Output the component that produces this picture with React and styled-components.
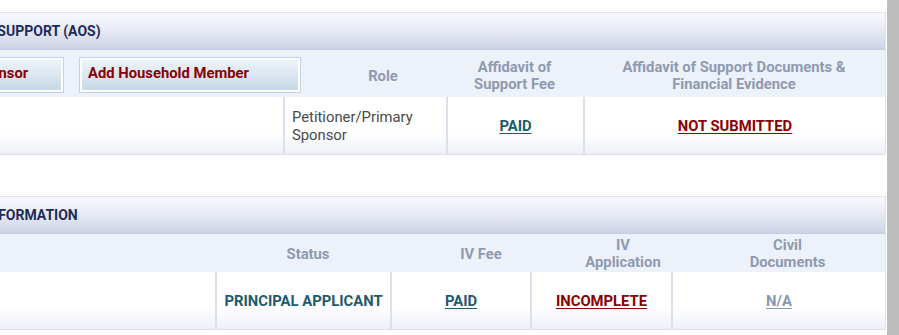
import React from 'react';
import styled, { createGlobalStyle } from 'styled-components';

const GlobalStyle = createGlobalStyle`
  html, body {
    margin: 0;
    padding: 0;
    background: #ffffff;
    overflow: hidden;
  }
  body {
    font-family: Roboto, 'Liberation Sans', Arial, sans-serif;
  }
`;

const Screen = styled.div`
  display: flex;
  width: 899px;
  height: 335px;
`;

const Viewport = styled.div`
  flex: 1;
  overflow: hidden;
  padding-top: 12px;
`;

const ScrollTrack = styled.div`
  width: 12px;
  background: #bebebe;
`;

const Content = styled.div`
  width: 1006px;
  margin-left: -120px;
  display: flex;
  flex-direction: column;
  gap: 41px;
`;

const Panel = styled.section`
  border: 1px solid #dfe4ef;
  border-bottom: none;
  background: #ffffff;
`;

const PanelTitle = styled.h2`
  margin: 0;
  height: 36px;
  display: flex;
  align-items: center;
  padding-left: 24px;
  font-size: 14px;
  font-weight: 700;
  color: #1f2a5c;
  background: linear-gradient(to bottom, #f8f9fc 0%, #e6e9f3 50%, #cdd3e6 100%);
  border-bottom: 1px solid #c6cde0;
`;

const HeadRow = styled.div`
  display: grid;
  grid-template-columns: ${(p) => p.$cols};
  height: ${(p) => p.$h}px;
  background: #edf1f9;
`;

const HeadCell = styled.div`
  grid-column: ${(p) => p.$col || 'auto'};
  display: flex;
  align-items: center;
  justify-content: center;
  padding-top: ${(p) => p.$pt || 0}px;
  text-align: center;
  font-size: 14.8px;
  font-weight: 700;
  line-height: 17px;
  color: #8e9ab0;
`;

const ButtonBar = styled.div`
  display: flex;
  gap: 15px;
  padding: 7px 0 0 15px;
`;

const ActionButton = styled.button`
  width: ${(p) => p.$w}px;
  height: 36px;
  padding: 7px 8px 0;
  display: flex;
  align-items: flex-start;
  font-family: Roboto, 'Liberation Sans', Arial, sans-serif;
  font-size: 14.8px;
  font-weight: 700;
  line-height: 17px;
  color: #8b0000;
  white-space: nowrap;
  border: 1px solid #c3d3e5;
  box-shadow: inset 0 0 0 2px #ffffff;
  background: linear-gradient(to bottom, #f0f4f9 0%, #dbe6f0 50%, #c4d6e7 100%);
  cursor: pointer;
`;

const DataRow = styled.div`
  display: grid;
  grid-template-columns: ${(p) => p.$cols};
  height: 57px;
  border-bottom: 1px solid #d9dfec;
  background: linear-gradient(to bottom, #ffffff 0%, #ffffff 62%, #eef0f7 100%);
`;

const DataCell = styled.div`
  display: flex;
  align-items: center;
  justify-content: ${(p) => (p.$left ? 'flex-start' : 'center')};
  padding-left: ${(p) => (p.$left ? '7px' : '0')};
  border-left: ${(p) => (p.$first ? 'none' : '2px solid #dbe0ed')};
  font-size: 14.8px;
  line-height: 18px;
  color: #4a4a4a;
`;

const StatusLink = styled.a`
  font-weight: 700;
  font-size: 14.8px;
  color: ${(p) => p.$color};
  text-decoration: ${(p) => (p.$plain ? 'none' : 'underline')};
  text-underline-offset: 2px;
  text-decoration-thickness: 1px;
  cursor: pointer;
`;

const TEAL = '#1e5a6d';
const RED = '#8b0000';
const GREY = '#8797ae';

export default function App() {
  return (
    <>
      <GlobalStyle />
      <Screen>
        <Viewport>
          <Content>
            <Panel>
              <PanelTitle>AFFIDAVIT OF SUPPORT (AOS)</PanelTitle>
              <HeadRow $cols="439px 126px 137px 302px" $h={47}>
                <ButtonBar>
                  <ActionButton $w={168}>Add Joint Sponsor</ActionButton>
                  <ActionButton $w={222}>Add Household Member</ActionButton>
                </ButtonBar>
                <HeadCell $pt={5}>Role</HeadCell>
                <HeadCell $pt={5}>
                  Affidavit of
                  <br />
                  Support Fee
                </HeadCell>
                <HeadCell $pt={5}>
                  Affidavit of Support Documents &amp;
                  <br />
                  Financial Evidence
                </HeadCell>
              </HeadRow>
              <DataRow $cols="402px 163px 137px 302px">
                <DataCell $first />
                <DataCell $left>
                  Petitioner/Primary
                  <br />
                  Sponsor
                </DataCell>
                <DataCell>
                  <StatusLink $color={TEAL}>PAID</StatusLink>
                </DataCell>
                <DataCell>
                  <StatusLink $color={RED}>NOT SUBMITTED</StatusLink>
                </DataCell>
              </DataRow>
            </Panel>

            <Panel>
              <PanelTitle>APPLICANT INFORMATION</PanelTitle>
              <HeadRow $cols="387px 80px 64px 138px 6px 134px 195px" $h={38}>
                <HeadCell $col="2" $pt={3}>Status</HeadCell>
                <HeadCell $col="4" $pt={3}>IV Fee</HeadCell>
                <HeadCell $col="6" $pt={2}>
                  IV
                  <br />
                  Application
                </HeadCell>
                <HeadCell $col="7" $pt={2}>
                  Civil
                  <br />
                  Documents
                </HeadCell>
              </HeadRow>
              <DataRow $cols="334px 175px 140px 141px 214px">
                <DataCell $first />
                <DataCell>
                  <StatusLink $color={TEAL} $plain>
                    PRINCIPAL APPLICANT
                  </StatusLink>
                </DataCell>
                <DataCell>
                  <StatusLink $color={TEAL}>PAID</StatusLink>
                </DataCell>
                <DataCell>
                  <StatusLink $color={RED}>INCOMPLETE</StatusLink>
                </DataCell>
                <DataCell>
                  <StatusLink $color={GREY}>N/A</StatusLink>
                </DataCell>
              </DataRow>
            </Panel>
          </Content>
        </Viewport>
        <ScrollTrack />
      </Screen>
    </>
  );
}
